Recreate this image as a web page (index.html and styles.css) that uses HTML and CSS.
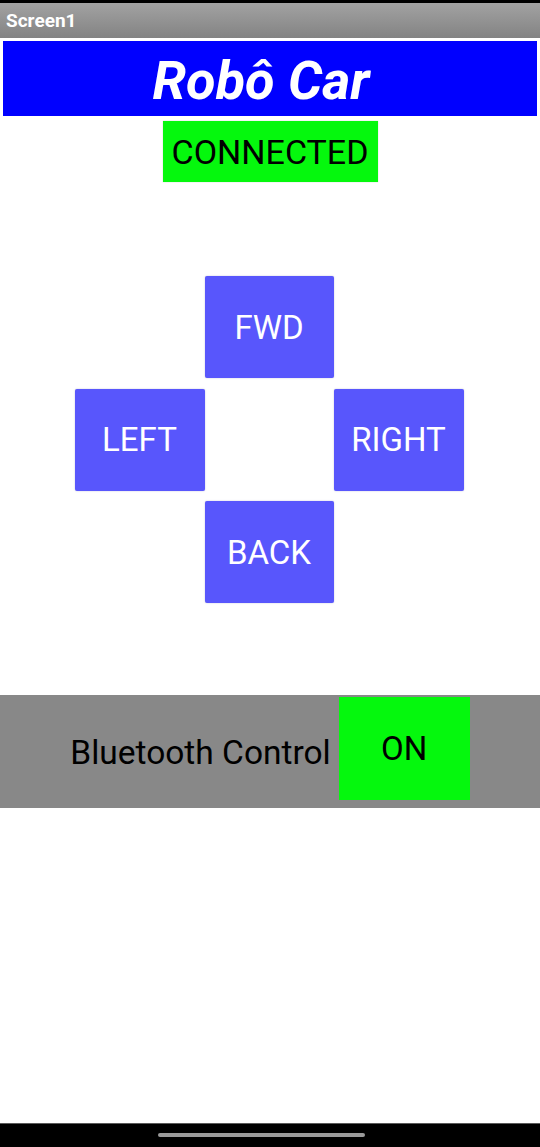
FILE: index.html
```html
<!DOCTYPE html>
<html lang="pt">
<head>
<meta charset="utf-8">
<title>Screen1</title>
<link rel="stylesheet" href="styles.css">
</head>
<body>
<div class="phone">
  <div class="status"></div>
  <div class="titlebar">Screen1</div>
  <div class="content">
    <div class="banner">Robô Car</div>
    <div class="connected">CONNECTED</div>
    <div class="pad">
      <div class="btn fwd">FWD</div>
      <div class="btn left">LEFT</div>
      <div class="btn right">RIGHT</div>
      <div class="btn back">BACK</div>
    </div>
    <div class="band">
      <span class="bt-label">Bluetooth Control</span>
      <div class="on">ON</div>
    </div>
  </div>
  <div class="navbar"><div class="handle"></div></div>
</div>
</body>
</html>
```

FILE: styles.css
```css
html, body {
  margin: 0;
  padding: 0;
  background: #ffffff;
}
.phone {
  width: 540px;
  height: 1147px;
  display: flex;
  flex-direction: column;
  font-family: Roboto, "Noto Sans", sans-serif;
  overflow: hidden;
}
.status {
  height: 3px;
  background: #000;
}
.titlebar {
  height: 35px;
  background: linear-gradient(#a2a2a2, #838383);
  color: #fff;
  font-weight: bold;
  font-size: 19px;
  line-height: 36px;
  padding-left: 6px;
  border-bottom: 3px solid #fff;
}
.content {
  flex: 1;
  display: flex;
  flex-direction: column;
  align-items: center;
}
.banner {
  align-self: stretch;
  margin: 0 3px;
  height: 75px;
  background: #0000ff;
  color: #fff;
  font-weight: bold;
  font-style: italic;
  font-size: 54px;
  line-height: 80px;
  text-align: center;
  padding-right: 18px;
}
.connected {
  margin-top: 5px;
  width: 215px;
  height: 61px;
  background: #05f80d;
  color: #000;
  font-size: 34px;
  line-height: 63px;
  text-align: center;
  box-shadow: 0 0 1px rgba(0,0,0,0.25);
}
.pad {
  margin-top: 94px;
  margin-right: 2px;
  display: grid;
  grid-template-columns: 130px 129px 130px;
  grid-template-rows: 102px 102px 102px;
  row-gap: 10.5px;
}
.btn {
  background: #5856fc;
  color: #fff;
  font-size: 33px;
  display: flex;
  align-items: center;
  justify-content: center;
  border-radius: 2px;
  box-shadow: 0 0 1.5px rgba(40,40,120,0.35);
}
.fwd { grid-column: 2; grid-row: 1; }
.left { grid-column: 1; grid-row: 2; }
.right { grid-column: 3; grid-row: 2; }
.back { grid-column: 2; grid-row: 3; }
.band {
  margin-top: 92px;
  align-self: stretch;
  height: 113px;
  background: #888888;
  display: flex;
  justify-content: center;
  align-items: center;
  gap: 8px;
}
.bt-label {
  font-size: 33.5px;
  color: #000;
  padding-top: 2px;
}
.on {
  align-self: flex-start;
  margin-top: 2px;
  width: 131px;
  height: 103px;
  background: #05f80d;
  color: #000;
  font-size: 33px;
  display: flex;
  align-items: center;
  justify-content: center;
  padding-bottom: 1px;
  box-sizing: border-box;
}
.navbar {
  height: 23px;
  background: #000;
  border-top: 1px solid #5a5a5a;
  display: flex;
  justify-content: center;
  align-items: flex-start;
}
.handle {
  margin-top: 9px;
  margin-right: 17px;
  width: 207px;
  height: 4px;
  border-radius: 2px;
  background: #9a9a9a;
}
```
